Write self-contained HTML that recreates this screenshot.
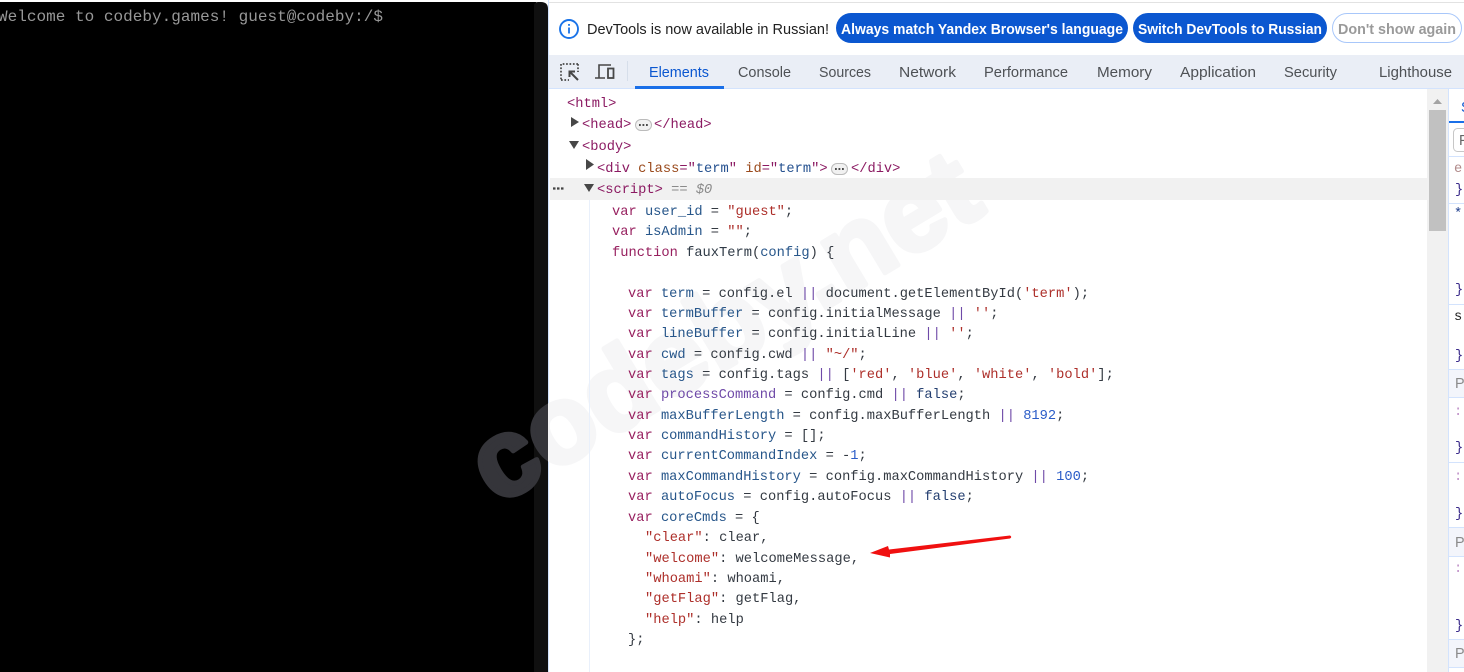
<!DOCTYPE html>
<html lang="en"><head><meta charset="utf-8"><title>DevTools</title>
<style>
html,body{margin:0;padding:0;background:#fff;width:1464px;height:672px;overflow:hidden}
svg{display:block}
text{white-space:pre}
.m{font-family:"Liberation Mono",monospace;font-size:13.72px;fill:#343a42;transform:translateY(-1px)}
.u{font-family:"Liberation Sans",sans-serif;font-size:14.4px}
.t{fill:#4e5155}
.g{fill:#8b1a62}.a{fill:#9a4a1c}.q{fill:#24508f}
.k{fill:#97205f}.v{fill:#27568a}.s{fill:#ad2f2a}.n{fill:#2a5cc8}.o{fill:#6f4aa8}.d{fill:#2f3a46}.f{fill:#243f70}
</style></head><body>
<svg xmlns="http://www.w3.org/2000/svg" width="1464" height="672" viewBox="0 0 1464 672">
<defs>
<clipPath id="cb"><rect x="0" y="0" width="548" height="672"/></clipPath>
<clipPath id="cw"><rect x="548" y="0" width="916" height="672"/></clipPath>
</defs>
<rect width="1464" height="672" fill="#fff"/>
<!-- left terminal -->
<rect x="0" y="2" width="536" height="670" fill="#000"/>
<path d="M534 672V6q0-4 4-4h3q7 0 7 7V672z" fill="#101010"/>
<rect x="548" y="0" width="1" height="672" fill="#d3e3fd"/>
<text x="-2" y="21" font-family="Liberation Mono,monospace" font-size="16" fill="#989898" textLength="385" lengthAdjust="spacing">Welcome to codeby.games! guest@codeby:/$</text>
<!-- watermark -->
<g font-family="Liberation Sans,sans-serif" font-weight="700" font-size="110" stroke-width="5" stroke-linejoin="round">
<g clip-path="url(#cb)"><text transform="translate(497 506) rotate(-31)" fill="#35353a" stroke="#35353a">codeby.net</text></g>
<g clip-path="url(#cw)"><text transform="translate(497 506) rotate(-31)" fill="#f6f6f7" stroke="#f6f6f7">codeby.net</text></g>
</g>
<!-- infobar -->
<rect x="549" y="2" width="915" height="1" fill="#e2e2e2"/>
<circle cx="569" cy="29" r="9" fill="none" stroke="#1a73e8" stroke-width="1.9"/>
<rect x="568.1" y="27.5" width="1.8" height="6" fill="#1a73e8"/><rect x="568.1" y="24" width="1.8" height="1.8" fill="#1a73e8"/>
<text class="u" x="587" y="34" fill="#1f1f1f" textLength="242" lengthAdjust="spacingAndGlyphs">DevTools is now available in Russian!</text>
<rect x="836" y="13" width="292" height="30" rx="15" fill="#0b57d0"/>
<text class="u" x="841" y="34" fill="#fff" font-weight="700" textLength="282" lengthAdjust="spacingAndGlyphs">Always match Yandex Browser's language</text>
<rect x="1133" y="13" width="194" height="30" rx="15" fill="#0b57d0"/>
<text class="u" x="1138" y="34" fill="#fff" font-weight="700" textLength="184" lengthAdjust="spacingAndGlyphs">Switch DevTools to Russian</text>
<rect x="1332.5" y="13.5" width="129" height="29" rx="14.5" fill="#fff" stroke="#a8c7fa"/>
<text class="u" x="1338" y="34" fill="#9a9a9a" font-weight="700" textLength="118" lengthAdjust="spacingAndGlyphs">Don't show again</text>
<!-- toolbar -->
<rect x="549" y="55" width="915" height="33" fill="#eaeef6"/>
<rect x="549" y="88" width="915" height="1" fill="#d3e3fd"/>
<path d="M578 64h-17M561 64v16M561 80h8M578 64v8" fill="none" stroke="#474747" stroke-width="1.7" stroke-dasharray="1.7 1.7"/>
<path d="M578 80l-8-8M569.5 77v-5.5H575" fill="none" stroke="#474747" stroke-width="2"/>
<path d="M599 78V65h12M595 78h10" fill="none" stroke="#474747" stroke-width="1.6"/>
<rect x="608" y="68.500" width="5.500" height="9.500" fill="none" stroke="#474747" stroke-width="1.800"/>
<rect x="627" y="61" width="1" height="20" fill="#d6deea"/>
<text class="u" x="649" y="77" fill="#0b57d0" textLength="60" lengthAdjust="spacingAndGlyphs">Elements</text>
<rect x="635" y="86" width="89" height="3" fill="#1a6fe8"/>
<text class="u t" x="738" y="77" textLength="53" lengthAdjust="spacingAndGlyphs">Console</text>
<text class="u t" x="819" y="77" textLength="52" lengthAdjust="spacingAndGlyphs">Sources</text>
<text class="u t" x="899" y="77" textLength="57" lengthAdjust="spacingAndGlyphs">Network</text>
<text class="u t" x="984" y="77" textLength="84" lengthAdjust="spacingAndGlyphs">Performance</text>
<text class="u t" x="1097" y="77" textLength="55" lengthAdjust="spacingAndGlyphs">Memory</text>
<text class="u t" x="1180" y="77" textLength="76" lengthAdjust="spacingAndGlyphs">Application</text>
<text class="u t" x="1284" y="77" textLength="53" lengthAdjust="spacingAndGlyphs">Security</text>
<text class="u t" x="1379" y="77" textLength="73" lengthAdjust="spacingAndGlyphs">Lighthouse</text>
<!-- selected row & guide -->
<rect x="550" y="178" width="877" height="22" fill="#f1f1f1"/>
<rect x="589" y="200" width="1" height="472" fill="#e9f0fb"/>
<!-- scrollbar -->
<rect x="1427" y="89" width="21" height="583" fill="#f1f1f1"/>
<path d="M1433 104l4.500-5 4.500 5z" fill="#a3a3a3"/>
<rect x="1429" y="110" width="17" height="121" fill="#c1c1c1"/>
<!-- sidebar -->
<rect x="1448" y="89" width="1" height="583" fill="#d3e3fd"/>
<text class="u" x="1461" y="112" fill="#0b57d0">S</text>
<rect x="1449" y="121" width="15" height="2" fill="#1a6fe8"/>
<rect x="1453.500" y="128.500" width="20" height="23" rx="4" fill="#fff" stroke="#c7c7c7"/>
<text class="u" x="1459" y="145" fill="#666">F</text>
<rect x="1449" y="156" width="15" height="1" fill="#d3e3fd"/>
<text class="m" x="1454" y="173" style="fill:#b08a8a">e</text>
<text class="m" x="1455" y="194" style="fill:#3a2a8a">}</text>
<rect x="1449" y="203" width="15" height="1" fill="#d3e3fd"/>
<text class="m" x="1454" y="218" style="fill:#1a3a8a">*</text>
<text class="m" x="1455" y="294" style="fill:#3a2a8a">}</text>
<rect x="1449" y="304" width="15" height="1" fill="#d3e3fd"/>
<text class="m" x="1454" y="321" style="fill:#222">s</text>
<text class="m" x="1455" y="360" style="fill:#3a2a8a">}</text>
<rect x="1449" y="369" width="15" height="28" fill="#f3f5fb"/><rect x="1449" y="369" width="15" height="1" fill="#d3e3fd"/><rect x="1449" y="397" width="15" height="1" fill="#d3e3fd"/>
<text class="u" x="1455" y="388" fill="#8a8a8a">P</text>
<text class="m" x="1454" y="416" style="fill:#c090c8">:</text>
<text class="m" x="1455" y="452" style="fill:#3a2a8a">}</text>
<rect x="1449" y="462" width="15" height="1" fill="#d3e3fd"/>
<text class="m" x="1454" y="481" style="fill:#c090c8">:</text>
<text class="m" x="1455" y="518" style="fill:#3a2a8a">}</text>
<rect x="1449" y="527" width="15" height="29" fill="#f3f5fb"/><rect x="1449" y="527" width="15" height="1" fill="#d3e3fd"/><rect x="1449" y="556" width="15" height="1" fill="#d3e3fd"/>
<text class="u" x="1455" y="547" fill="#8a8a8a">P</text>
<text class="m" x="1454" y="573" style="fill:#c090c8">:</text>
<text class="m" x="1455" y="630" style="fill:#3a2a8a">}</text>
<rect x="1449" y="639" width="15" height="28" fill="#f3f5fb"/><rect x="1449" y="639" width="15" height="1" fill="#d3e3fd"/><rect x="1449" y="667" width="15" height="1" fill="#d3e3fd"/>
<text class="u" x="1455" y="658" fill="#8a8a8a">P</text>
<!-- DOM tree -->
<path d="M571 117v10l8-5z M569 141h10l-5 8z M586 159v11l8-5.500z M584 184h10l-5 8z" fill="#474747"/>
<text class="m g" x="567" y="108">&lt;html&gt;</text>
<text class="m g" x="582" y="129">&lt;head&gt;</text>
<rect x="635.500" y="119.500" width="16" height="11" rx="5.500" fill="#f1f1f1" stroke="#bbb"/>
<path d="M639 125h1.800M642.500 125h1.800M646 125h1.800" stroke="#333" stroke-width="1.800"/>
<text class="m g" x="654" y="129">&lt;/head&gt;</text>
<text class="m g" x="582" y="151">&lt;body&gt;</text>
<text class="m" x="597" y="173"><tspan class="g">&lt;div </tspan><tspan class="a">class</tspan><tspan class="g">="</tspan><tspan class="q">term</tspan><tspan class="g">" </tspan><tspan class="a">id</tspan><tspan class="g">="</tspan><tspan class="q">term</tspan><tspan class="g">"&gt;</tspan></text>
<rect x="831.500" y="163.500" width="16" height="11" rx="5.500" fill="#f1f1f1" stroke="#bbb"/>
<path d="M835 169h1.800M838.500 169h1.800M842 169h1.800" stroke="#333" stroke-width="1.800"/>
<text class="m g" x="851" y="173">&lt;/div&gt;</text>
<path d="M553 188.500h2.500M557 188.500h2.500M561 188.500h2.500" stroke="#444" stroke-width="2.200"/>
<text class="m" x="597" y="194"><tspan class="g">&lt;script&gt;</tspan><tspan style="fill:#8a8a8a"> == </tspan><tspan style="fill:#8a8a8a;font-style:italic">$0</tspan></text>
<!-- code -->
<text class="m" x="612" y="216"><tspan class="k">var </tspan><tspan class="v">user_id</tspan> = <tspan class="s">"guest"</tspan>;</text>
<text class="m" x="612" y="236"><tspan class="k">var </tspan><tspan class="v">isAdmin</tspan> = <tspan class="s">""</tspan>;</text>
<text class="m" x="612" y="257"><tspan class="k">function </tspan><tspan class="d">fauxTerm</tspan>(<tspan class="v">config</tspan>) {</text>
<text class="m" x="628" y="298"><tspan class="k">var </tspan><tspan class="v">term</tspan> = config.el <tspan class="o">||</tspan> document.getElementById(<tspan class="s">'term'</tspan>);</text>
<text class="m" x="628" y="318"><tspan class="k">var </tspan><tspan class="v">termBuffer</tspan> = config.initialMessage <tspan class="o">||</tspan> <tspan class="s">''</tspan>;</text>
<text class="m" x="628" y="338"><tspan class="k">var </tspan><tspan class="v">lineBuffer</tspan> = config.initialLine <tspan class="o">||</tspan> <tspan class="s">''</tspan>;</text>
<text class="m" x="628" y="359"><tspan class="k">var </tspan><tspan class="v">cwd</tspan> = config.cwd <tspan class="o">||</tspan> <tspan class="s">"~/"</tspan>;</text>
<text class="m" x="628" y="379"><tspan class="k">var </tspan><tspan class="v">tags</tspan> = config.tags <tspan class="o">||</tspan> [<tspan class="s">'red'</tspan>, <tspan class="s">'blue'</tspan>, <tspan class="s">'white'</tspan>, <tspan class="s">'bold'</tspan>];</text>
<text class="m" x="628" y="399"><tspan class="k">var </tspan><tspan class="o">processCommand</tspan> = config.cmd <tspan class="o">||</tspan> <tspan class="f">false</tspan>;</text>
<text class="m" x="628" y="420"><tspan class="k">var </tspan><tspan class="v">maxBufferLength</tspan> = config.maxBufferLength <tspan class="o">||</tspan> <tspan class="n">8192</tspan>;</text>
<text class="m" x="628" y="440"><tspan class="k">var </tspan><tspan class="v">commandHistory</tspan> = [];</text>
<text class="m" x="628" y="460"><tspan class="k">var </tspan><tspan class="v">currentCommandIndex</tspan> = -<tspan class="n">1</tspan>;</text>
<text class="m" x="628" y="481"><tspan class="k">var </tspan><tspan class="v">maxCommandHistory</tspan> = config.maxCommandHistory <tspan class="o">||</tspan> <tspan class="n">100</tspan>;</text>
<text class="m" x="628" y="501"><tspan class="k">var </tspan><tspan class="v">autoFocus</tspan> = config.autoFocus <tspan class="o">||</tspan> <tspan class="f">false</tspan>;</text>
<text class="m" x="628" y="522"><tspan class="k">var </tspan><tspan class="v">coreCmds</tspan> = {</text>
<text class="m" x="645" y="542"><tspan class="s">"clear"</tspan>: clear,</text>
<text class="m" x="645" y="563"><tspan class="s">"welcome"</tspan>: welcomeMessage,</text>
<text class="m" x="645" y="583"><tspan class="s">"whoami"</tspan>: whoami,</text>
<text class="m" x="645" y="603"><tspan class="s">"getFlag"</tspan>: getFlag,</text>
<text class="m" x="645" y="624"><tspan class="s">"help"</tspan>: help</text>
<text class="m" x="628" y="644">};</text>
<!-- red arrow -->
<path d="M870 553L888 546L889 549.500L1010 535.500Q1012.500 537 1010 538.500L890 554L890 557.500Z" fill="#f01010"/>
</svg>
</body></html>
